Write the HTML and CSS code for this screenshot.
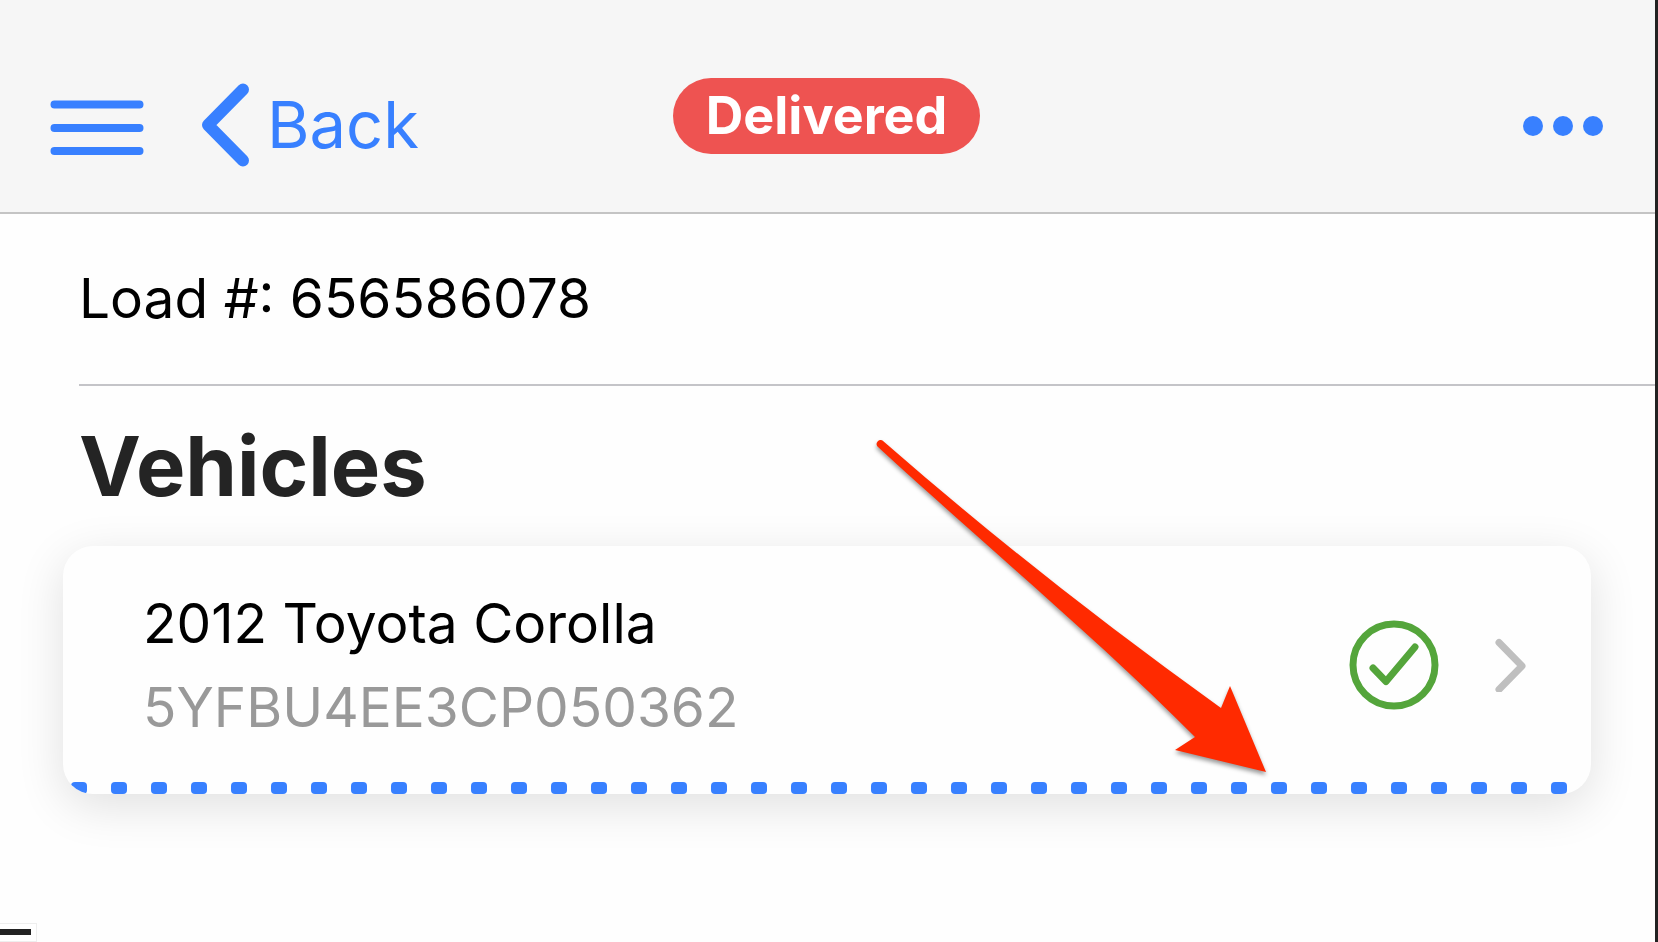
FILE: index.html
```html
<!DOCTYPE html>
<html lang="en">
<head>
  <meta charset="UTF-8">
  <meta name="viewport" content="width=device-width, initial-scale=1.0">
  <title>Load 656586078</title>
  <link rel="stylesheet" href="styles.css">
</head>
<body>
  <div id="app">
    <header class="toolbar">
      <div class="toolbar-start">
        <button class="icon-btn" aria-label="Menu">
          <svg width="94" height="60" viewBox="0 0 94 60">
            <path d="M4.500 9.500H89.500M4.500 33H89.500M4.500 56H89.500" stroke="currentColor" stroke-width="8" stroke-linecap="round"/>
          </svg>
        </button>
        <a href="#" class="back">
          <svg width="50" height="84" viewBox="0 0 50 84" fill="none">
            <path d="M42 6.500L7 42L42 77.500" stroke="currentColor" stroke-width="12" stroke-linecap="round" stroke-linejoin="round"/>
          </svg>
          <span>Back</span>
        </a>
      </div>
      <span class="status">Delivered</span>
      <div class="toolbar-end">
        <button class="icon-btn" aria-label="More">
          <svg width="80" height="22" viewBox="0 0 80 22" fill="currentColor">
            <circle cx="10" cy="12" r="10"/>
            <circle cx="40" cy="12" r="10"/>
            <circle cx="70" cy="12" r="10"/>
          </svg>
        </button>
      </div>
    </header>

    <main>
      <p class="load">Load #: 656586078</p>
      <h1>Vehicles</h1>

      <a href="#" class="card">
        <div class="vehicle">
          <h2>2012 Toyota Corolla</h2>
          <p>5YFBU4EE3CP050362</p>
        </div>
        <svg class="check" width="90" height="90" viewBox="0 0 90 90" fill="none" stroke-linecap="round" stroke-linejoin="round">
          <circle cx="45" cy="45" r="41" stroke="#54a53b" stroke-width="7"/>
          <path d="M24 48L37 61.500L66 27" stroke="#54a53b" stroke-width="7"/>
        </svg>
        <svg class="chevron" width="32" height="54" viewBox="0 0 32 54" fill="none">
          <path d="M4 4.500L27 28L4 51.500" stroke="#bfbfbf" stroke-width="7" stroke-linecap="round" stroke-linejoin="round"/>
        </svg>
        <!-- dotted bottom edge -->
        <svg class="dots" width="100%" height="12">
          <defs>
            <pattern id="dot" x="8" width="40" height="12" patternUnits="userSpaceOnUse">
              <rect width="16" height="12" rx="4" fill="#3880ff"/>
            </pattern>
          </defs>
          <rect width="100%" height="12" fill="url(#dot)"/>
        </svg>
      </a>

      <!-- pointer to the dotted edge -->
      <svg class="arrow" width="400" height="350" viewBox="0 0 400 350">
        <path d="M10.500 0.500Q170 140 349 268L358 246L394 332L303 310L323 297C230 203 125 116 5.500 6.500A4 4 0 0 1 10.500 0.500Z" fill="#ff2a00"/>
      </svg>
    </main>

    <footer>
      <div class="tab"><span></span></div>
    </footer>
  </div>
</body>
</html>
```

FILE: styles.css
```css
* {
  margin: 0;
  padding: 0;
  box-sizing: border-box;
}

body {
  background: #222;
  color: #000;
  font-family: Inter, Roboto, "Liberation Sans", sans-serif;
}

#app {
  display: flex;
  flex-direction: column;
  min-height: 100vh;
  margin-right: 3px;
  background: #fefefe;
}

a {
  color: inherit;
  text-decoration: none;
}

svg {
  display: block;
  flex-shrink: 0;
}

.toolbar {
  display: grid;
  grid-template-columns: 1fr auto 1fr;
  align-items: center;
  height: 214px;
  padding: 38px 52px 0 50px;
  background: #f6f6f6;
  border-bottom: 2px solid #c4c4c4;
  color: #3880ff;
}

.toolbar-start {
  display: flex;
  align-items: center;
  gap: 57px;
}

.toolbar-end {
  display: flex;
  justify-content: flex-end;
}

.icon-btn {
  border: none;
  background: none;
  color: inherit;
  cursor: pointer;
}

.back {
  display: flex;
  align-items: center;
  gap: 16px;
  font-size: 65px;
  line-height: 84px;
}

.status {
  padding: 0 33px;
  margin-bottom: 18px;
  border-radius: 38px;
  background: #ee5351;
  color: #fff;
  font-size: 52px;
  font-weight: 700;
  line-height: 76px;
}

main {
  position: relative;
  flex: 1;
}

.load {
  margin-left: 79px;
  padding: 52px 0 54px;
  border-bottom: 2px solid #c4c4c8;
  font-size: 55px;
  line-height: 64px;
}

h1 {
  margin: 30px 79px;
  color: #242424;
  font-size: 83px;
  font-weight: 700;
  line-height: 100px;
}

.card {
  position: relative;
  display: flex;
  align-items: center;
  margin: 0 64px 0 63px;
  padding: 35px 64px 45px 80px;
  border-radius: 30px;
  background: #fefefe;
  box-shadow: 0 12px 48px rgba(0, 0, 0, 0.12);
  overflow: hidden;
}

.vehicle {
  flex: 1;
}

.vehicle h2,
.vehicle p {
  font-size: 55px;
  font-weight: 400;
  line-height: 84px;
}

.vehicle p {
  color: #999;
}

.chevron {
  margin-left: 56px;
}

.dots {
  position: absolute;
  left: 0;
  bottom: 0;
}

.arrow {
  position: absolute;
  top: 226px;
  left: 872px;
  overflow: visible;
  filter: drop-shadow(0 3px 2px rgba(0, 0, 0, 0.4));
}

footer {
  display: flex;
}

.tab {
  width: 37px;
  padding: 5px 5px 6px 0;
  border: 1px solid #eee;
  border-left: none;
  background: #fff;
}

.tab span {
  display: block;
  height: 6px;
  background: #222;
}
```
